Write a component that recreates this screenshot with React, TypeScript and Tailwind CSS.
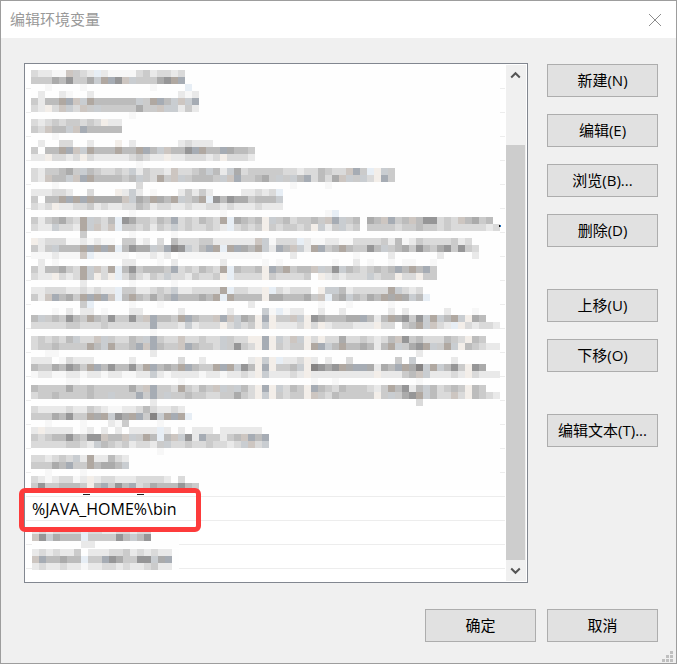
import React from 'react';

const CELL = 7;

const PALETTE: Record<string, string> = {
  a: '#f7f7f7',
  b: '#e9e9e9',
  c: '#dadada',
  d: '#cbcbcb',
  e: '#bcbcbc',
  f: '#ababab',
  g: '#969697',
  h: '#868484',
  B: '#e7eef5',
  C: '#c9cdd1',
  D: '#a6acb4',
  P: '#f3eee9',
  Q: '#cdc6c1',
  R: '#b0a8a1',
};

const LIST_MOSAIC = [
  'cbbaaQdcbBbaaaacdbccbc',
  'dddfegddfCRDgQCdddfgRD',
  '..a....a.........a....B',
  '.b..ba..b............bab',
  'dbeeRDQCReeeeeeCdRDeCQCD',
  'cbPcQCcQdCdddddfddQCCbdb',
  '..............a',
  'cbcdcddcdcPbb',
  'dcQeeCQDeeeee',
  '...a',
  '.b..cc..b...P.b......bcbbb',
  'd.eeRDQCReeeReeRDeCQeegDReeDfeed',
  'bbPccbcPcbbbbbcdcbbPbbcccbcPcccb',
  '...............a',
  'cbddefdCedccdcCbdccbQccdeCebCfcdddddccbccedccQDdBPCd',
  'cbQeeCQDReeeedeCdcRdQCdeeedCQDddefdCdCeDcecfQCdCcPDd',
  '...a...........c.....................a....a',
  'bbbccb..c...PbCb.a...bdbdb....bbcbcB',
  'd.eeRDRDRffffQCfeRfeRCdeRBgegffdeeeC',
  'cbcPbbccdbcbbccedbccbbcbbccbcbbbcbbb',
  '..............a............a..............aB',
  'dbdefdcRCdceBgfddcedDcdcedcRBfedePCdecddedQDCde.feQDdeQeggcdcQefde',
  'cbbCccbRCQcQBddcdbdcCcdccdcbBcdcdPdcddcdPCbdCcd.ddddcddeddcdcccccbc',
  '.......d......a.....a',
  'Pbcccaababaa.ddab.c.ecccddbbbbbbQCacccBbaabbaaccccdbeabdccccdbc',
  'dbdCeeeRDRDRBegffCdDhgCceDRBRDfeRCbDeQCbRDdeReddgeCdefdgedfgdgdc',
  'aaabaaaQBaaaaa.aabab.aaaaaaaaaaaa....b........a....b......b....b',
  '.b.a.........bb...a.b......b.....a.a.......a..b.a..a.aa..a',
  'dbeefdcRCQcRBegdeeedDcdcedcRBeddePDeRdeeQCdgCedcdedeDeReDd',
  'cbbPcbcRCPcPBcecbdcCccbdccdPBccccPdccccd.PbcbcccCcddPccPdd',
  '.......b......a.....a',
  'bbcccbbcbcbbBddbbcdcCbbccccRBccbbPBcbccc.PCCebcccccRCcbc',
  'dbQDefdRDRDQBeRedfdeDeeefeRBReeeePffeeefdQBefCedfeRfRfCeB',
  '.......dB.....a...a............b.........a...a.....a',
  '...a.b.bb.a...bb.....b......b....CaBabb..b..b......b.b.....b...a',
  'eCdedgedRedgddgdQDeedRDeddQDQCfePDPddQCPgfeeeffDebeRfgdgCRCeRCPfe',
  'cccccddcccdccccccDcccbCbcccPcCcdPCPbbbcPcPbcccbbbPcc.deRCQcbBPcbccb',
  '.................a',
  'cdcdceCccQCdccedCDdccQccdccCdccPPDPCcQCPcPccfccdcbceQgdecccedcPed',
  'cddeddddReCRddeDQDeddQDeddcCdgdcPDPdcddPRDCeReefebeRCdfgRCdRCPedcbb',
  '..aa.............b.....................................b',
  'bbb.acbbb.....b......c..b......bPCPBbbcPb.b..c......d.C.....b',
  'eddfegfdRDegeegdRDefeRDeddRDRCgePDPddeCPhgfgRfDDfbfeDRfhCRCegdPgf',
  'abbaabbabbabbaabbCbabbbbabbabbcbPCbbbcbPbbbbbbbbbPbbbdeQCbbbcbPcbbb',
  '.....aa..............a..................a..a...........a',
  'eddddfddedddddfdQDddcRdcedQCdCecPDPCcedPDedcedddcbdRegbeCecdedPed',
  'cddeddddeddCdddDdDdCddeddccddfdcPCPdcddPQdcedddddPdCdfgRCeccQcPedcb',
  '.................b.....................................c',
  'cbbbbcbbdcbaabbcecbbcb',
  'dddfegddRfRCgfRDdhCRDRB',
  '..a....a...bad....a',
  'bPbbbb.ab.b.b.bbbbBb.b.bbb.bbbbbb',
  'dcdeegedggQeeQCdReBeQCgbDddbdeQDeD',
  'cccccddcbCedcdbccbdCccdccdccbcCQcC',
  '..................a',
  'ccbcdcCbRbbecb',
  'dddfeDddReffeC',
  '..a....a',
  'cbabccabPbccbbbccccb.c',
  'dgddeeedPeDdgeDcdfeeeged',
];

const LOWER_MOSAIC = ['bcbccccBccbbccbcc', 'QgCfeeeBddddgeCeg', '.......bb'];

const LAST_MOSAIC = ['bcbcbbd.bbbccdbcbcbb', 'QDeefeeBddDgfddggCfD', 'bcbbcbbabbccbcbbcdbb'];

const JAVA_INDEX = 18;
const ITEMS = Array.from({ length: 21 }, (_, i) => (i === JAVA_INDEX ? '%JAVA_HOME%\\bin' : ''));

interface MosaicProps {
  rows: string[];
  cols: number;
  className: string;
  children?: React.ReactNode;
}

function Mosaic({ rows, cols, className, children }: MosaicProps) {
  return (
    <svg
      width={cols * CELL}
      height={rows.length * CELL}
      shapeRendering="crispEdges"
      aria-hidden="true"
      className={`pointer-events-none absolute overflow-visible ${className}`}
    >
      <rect width={cols * CELL} height={rows.length * CELL} fill="#fefefe" />
      {rows.map((row, y) =>
        row.split('').map((c, x) =>
          c === '.' ? null : (
            <rect key={`${x}-${y}`} x={x * CELL} y={y * CELL} width={CELL} height={CELL} fill={PALETTE[c]} />
          )
        )
      )}
      {children}
    </svg>
  );
}

function DialogButton({ children }: { children: React.ReactNode }) {
  return (
    <button
      type="button"
      className="h-[33px] w-[111px] shrink-0 border border-[#adadad] bg-[#e1e1e1] pb-0.5 text-center text-[15px] leading-5 text-black hover:border-[#0078d7] hover:bg-[#e5f1fb]"
    >
      {children}
    </button>
  );
}

function ScrollBar() {
  return (
    <div className="flex w-5 shrink-0 flex-col bg-[#f0f0f0]">
      <button type="button" aria-label="向上滚动" className="mr-px flex h-5 items-center justify-center">
        <svg width="11" height="8" viewBox="0 0 11 8" fill="none" stroke="#555" strokeWidth="2">
          <path d="M1.2 6.5 L5.5 2.2 L9.8 6.5" />
        </svg>
      </button>
      <div className="flex flex-1 flex-col pt-[60px]">
        <div className="mr-px flex-1 bg-[#cdcdcd]" />
      </div>
      <button type="button" aria-label="向下滚动" className="mr-px flex h-[21px] items-center justify-center">
        <svg width="11" height="8" viewBox="0 0 11 8" fill="none" stroke="#555" strokeWidth="2">
          <path d="M1.2 1.5 L5.5 5.8 L9.8 1.5" />
        </svg>
      </button>
    </div>
  );
}

function PathList() {
  return (
    <div className="flex min-w-0 flex-1 border border-[#828790] bg-white p-px">
      <div className="relative min-w-0 flex-1 pb-3 pr-px">
        <ul>
          {ITEMS.map((item, i) => (
            <li key={i} className="h-6 border-b border-[#ededed] px-1.5 text-base leading-6 text-black">
              {item}
            </li>
          ))}
        </ul>
        <Mosaic rows={LIST_MOSAIC} cols={67} className="left-[5px] top-[5px]">
          {/* bits of the underlying text that stick out of the mosaic */}
          <rect x="468" y="155" width="1" height="2" fill="#111" />
          <rect x="469" y="155" width="1" height="2" fill="#1f6fc0" />
          <rect x="52" y="424" width="7" height="1" fill="#222" />
          <rect x="106" y="424" width="7" height="1" fill="#222" />
        </Mosaic>
        <Mosaic rows={LOWER_MOSAIC} cols={21} className="left-1.5 top-[462px]" />
        <Mosaic rows={LAST_MOSAIC} cols={21} className="left-1.5 top-[484px]" />
        <div className="pointer-events-none absolute -left-[7px] top-[423px] h-11 w-[182px] rounded-md border-[5px] border-[#fd3b3b]" />
      </div>
      <ScrollBar />
    </div>
  );
}

export default function App() {
  return (
    <div className="relative flex min-h-screen flex-col border border-[#9d9d9d] bg-[#f0f0f0] font-['Open_Sans','Noto_Sans_CJK_SC',sans-serif]">
      <header className="flex h-[37px] items-center justify-between bg-white pl-[9px] pr-[14px]">
        <h1 className="pb-0.5 text-[15px] leading-5 text-[#999]">编辑环境变量</h1>
        <button type="button" aria-label="关闭" className="flex h-5 w-[14px] items-center justify-center">
          <svg width="14" height="14" viewBox="0 0 14 14" fill="none" stroke="#8c8c8c" strokeWidth="1">
            <path d="M1 1 L13 13 M13 1 L1 13" />
          </svg>
        </button>
      </header>

      <main className="flex flex-1 flex-col gap-[26px] pb-[21px] pl-[23px] pr-[18px] pt-[25px]">
        <div className="flex gap-[19px]">
          <PathList />
          <div className="flex flex-col gap-[42px] pt-px">
            <div className="flex flex-col gap-[17px]">
              <DialogButton>新建(N)</DialogButton>
              <DialogButton>编辑(E)</DialogButton>
              <DialogButton>浏览(B)...</DialogButton>
              <DialogButton>删除(D)</DialogButton>
            </div>
            <div className="flex flex-col gap-[17px]">
              <DialogButton>上移(U)</DialogButton>
              <DialogButton>下移(O)</DialogButton>
            </div>
            <DialogButton>编辑文本(T)...</DialogButton>
          </div>
        </div>

        <div className="flex justify-end gap-[11px]">
          <DialogButton>确定</DialogButton>
          <DialogButton>取消</DialogButton>
        </div>
      </main>

      <svg width="11" height="11" className="absolute bottom-px right-[3px]" fill="#bfbfbf" shapeRendering="crispEdges" aria-hidden="true">
        <rect x="8" y="0" width="3" height="3" />
        <rect x="4" y="4" width="3" height="3" />
        <rect x="8" y="4" width="3" height="3" />
        <rect x="0" y="8" width="3" height="3" />
        <rect x="4" y="8" width="3" height="3" />
        <rect x="8" y="8" width="3" height="3" />
      </svg>
    </div>
  );
}
